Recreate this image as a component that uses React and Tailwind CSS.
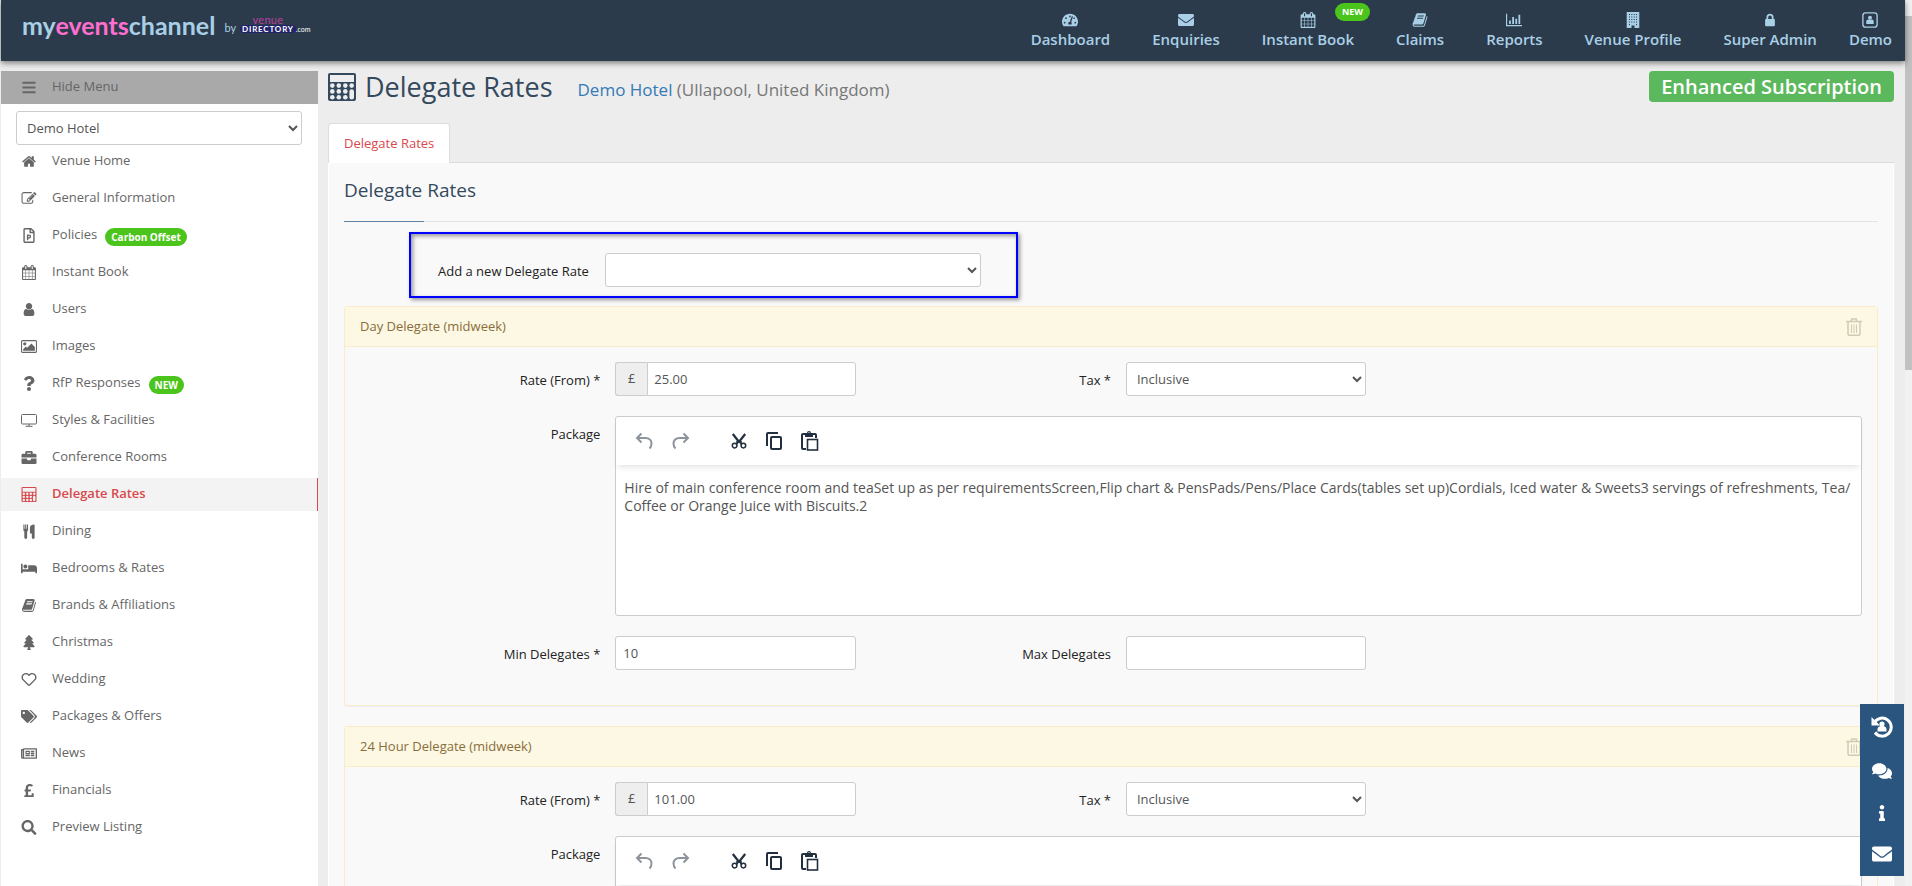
import React, { useState } from "react";
import {
  FaBars,
  FaBed,
  FaBriefcase,
  FaComments,
  FaEnvelope,
  FaInfo,
  FaPoundSign,
  FaQuestion,
  FaRegFilePowerpoint,
  FaRegHeart,
  FaRegNewspaper,
  FaSearch,
  FaTachometerAlt,
  FaTags,
  FaTree,
} from "react-icons/fa";

const Glyph = ({ box = "0 0 1792 1792", d, className }) => (
  <svg viewBox={box} fill="currentColor" className={className} aria-hidden="true">
    <path d={d} />
  </svg>
);

const HomeIcon = (p) => (
  <Glyph {...p} d="M1472 992v480q0 26-19 45t-45 19h-384v-384h-256v384h-384q-26 0-45-19t-19-45v-480q0-1 .5-3t.5-3l575-474 575 474q1 2 1 6zm223-69l-62 74q-8 9-21 11h-3q-13 0-21-7l-692-577-692 577q-12 8-24 7-13-2-21-11l-62-74q-8-10-7-23.5t11-21.5l719-599q32-26 76-26t76 26l244 204v-195q0-14 9-23t23-9h192q14 0 23 9t9 23v408l219 182q10 8 11 21.5t-7 23.5z" />
);

const EditIcon = (p) => (
  <Glyph {...p} d="M888 1184l116-116-152-152-116 116v56h96v96h56zm440-720q-16-16-33 1l-350 350q-17 17-1 33t33-1l350-350q17-17 1-33zm80 594v190q0 119-84.5 203.5t-203.5 84.5h-832q-119 0-203.5-84.5t-84.5-203.5v-832q0-119 84.5-203.5t203.5-84.5h832q63 0 117 25 15 7 18 23 3 17-9 29l-49 49q-14 14-32 8-23-6-45-6h-832q-66 0-113 47t-47 113v832q0 66 47 113t113 47h832q66 0 113-47t47-113v-126q0-13 9-22l64-64q15-15 35-7t20 29zm-96-738l288 288-672 672h-288v-288zm444 132l-92 92-288-288 92-92q28-28 68-28t68 28l152 152q28 28 28 68t-28 68z" />
);

const CalendarIcon = (p) => (
  <Glyph {...p} d="M192 1664h288v-288h-288v288zm352 0h320v-288h-320v288zm-352-352h288v-320h-288v320zm352 0h320v-320h-320v320zm-352-384h288v-288h-288v288zm736 736h320v-288h-320v288zm-384-736h320v-288h-320v288zm768 736h288v-288h-288v288zm-384-352h320v-320h-320v320zm-352-864v-288q0-13-9.5-22.5t-22.5-9.5h-64q-13 0-22.5 9.5t-9.5 22.5v288q0 13 9.5 22.5t22.5 9.5h64q13 0 22.5-9.5t9.5-22.5zm736 864h288v-320h-288v320zm-384-384h320v-288h-320v288zm384 0h288v-288h-288v288zm32-480v-288q0-13-9.5-22.5t-22.5-9.5h-64q-13 0-22.5 9.5t-9.5 22.5v288q0 13 9.5 22.5t22.5 9.5h64q13 0 22.5-9.5t9.5-22.5zm384-64v1280q0 52-38 90t-90 38h-1408q-52 0-90-38t-38-90v-1280q0-52 38-90t90-38h128v-96q0-66 47-113t113-47h64q66 0 113 47t47 113v96h384v-96q0-66 47-113t113-47h64q66 0 113 47t47 113v96h128q52 0 90 38t38 90z" />
);

const UserIcon = (p) => (
  <Glyph {...p} d="M1536 1399q0 109-62.5 187t-150.5 78h-854q-88 0-150.5-78t-62.5-187q0-85 8.5-160.5t31.5-152 58.5-131 94-89 134.5-34.5q131 128 313 128t313-128q76 0 134.5 34.5t94 89 58.5 131 31.5 152 8.5 160.5zm-256-887q0 159-112.5 271.5t-271.5 112.5-271.5-112.5-112.5-271.5 112.5-271.5 271.5-112.5 271.5 112.5 112.5 271.5z" />
);

const PictureIcon = (p) => (
  <Glyph {...p} box="-64 0 1920 1792" d="M576 576q0 80-56 136t-136 56-136-56-56-136 56-136 136-56 136 56 56 136zm1024 384v448h-1408v-192l320-320 160 160 512-512zm96-704h-1600q-13 0-22.5 9.5t-9.5 22.5v1216q0 13 9.5 22.5t22.5 9.5h1600q13 0 22.5-9.5t9.5-22.5v-1216q0-13-9.5-22.5t-22.5-9.5zm160 32v1216q0 66-47 113t-113 47h-1600q-66 0-113-47t-47-113v-1216q0-66 47-113t113-47h1600q66 0 113 47t47 113z" />
);

const BookIcon = (p) => (
  <Glyph {...p} d="M1703 478q40 57 18 129l-275 906q-19 64-76.5 107.5t-122.5 43.5h-923q-77 0-148.5-53.5t-99.5-131.5q-24-67-2-127 0-4 3-27t4-37q1-8-3-21.5t-3-19.5q2-11 8-21t16.5-23.5 16.5-23.5q23-38 45-91.5t30-91.5q3-10 .5-30t-.5-28q3-11 17-28t17-23q21-36 42-92t25-90q1-9-2.5-32t.5-28q4-13 22-30.5t22-22.5q19-26 42.5-84.5t27.5-96.5q1-8-3-25.5t-2-26.5q2-8 9-18t18-23 17-21q8-12 16.5-30.5t15-35 16-36 19.5-32 26.5-23.5 36-11.5 47.5 5.500l-1 3q38-9 51-9h761q74 0 114 56t18 130l-274 906q-36 119-71.500 153.500t-128.500 34.500h-869q-27 0-38 15-11 16-1 43 24 70 144 70h923q29 0 56-15.500t35-41.500l300-987q7-22 5-57 38 15 59 43zm-1064 2q-4 13 2 22.500t20 9.500h608q13 0 25.500-9.500t16.500-22.500l21-64q4-13-2-22.500t-20-9.500h-608q-13 0-25.500 9.500t-16.500 22.500zm-83 256q-4 13 2 22.500t20 9.500h608q13 0 25.500-9.500t16.500-22.500l21-64q4-13-2-22.500t-20-9.500h-608q-13 0-25.500 9.500t-16.500 22.500z" />
);

const CalculatorIcon = ({ className }) => (
  <svg viewBox="0 0 28 28" className={className} aria-hidden="true">
    <path
      fill="currentColor"
      fillRule="evenodd"
      d="M2 0h24a2 2 0 0 1 2 2v24a2 2 0 0 1-2 2H2a2 2 0 0 1-2-2V2a2 2 0 0 1 2-2zM2 2v7h24V2z"
    />
    <g fill="var(--hole, #ededed)">
      {[4.300, 10.800, 17.300].map((x) =>
        [12.600, 18.400, 24.200].map((y) => <circle key={`${x}-${y}`} cx={x} cy={y} r="2.300" />)
      )}
      <circle cx="23.700" cy="12.600" r="2.300" />
      <rect x="21.400" y="16.200" width="4.600" height="10.300" rx="2.300" />
    </g>
  </svg>
);

const TvIcon = ({ className }) => (
  <svg viewBox="0 0 16 14" fill="none" stroke="currentColor" className={className} aria-hidden="true">
    <rect x="0.5" y="1" width="15" height="9.500" rx="1" />
    <path d="M8 10.500v2M4.500 12.800h7" />
  </svg>
);

const CutleryIcon = ({ className }) => (
  <svg viewBox="0 0 13 16" fill="currentColor" className={className} aria-hidden="true">
    <path d="M.5 .5h1.200V5h.7V.5h1.200V5h.7V.5h1.200V6c0 1-.5 1.600-1 2v6.500a1.500 1.500 0 0 1-3 0V8C1 7.600.5 7 .5 6zM12.500 1v13.500a1.500 1.500 0 0 1-3 0V10H7.500V4C7.500 2 9 .5 12 .5a.5.5 0 0 1 .5.5z" />
  </svg>
);

const ChartIcon = ({ className }) => (
  <svg viewBox="0 0 18 16" fill="currentColor" className={className} aria-hidden="true">
    <path d="M0 1h1.300v12.700H18V15H0zM3.500 8.500h2V12.500h-2zM7 4.500h2v8H7zM10.500 6.500h2v6h-2zM14 2h2v10.500h-2z" />
  </svg>
);

const LockIcon = ({ className }) => (
  <svg viewBox="0 0 18 18" className={className} aria-hidden="true">
    <path fill="none" stroke="currentColor" strokeWidth="2" d="M6 8.500V6a3 3 0 0 1 6 0v2.500" />
    <rect x="3.500" y="8" width="11" height="8" rx="1" fill="currentColor" />
  </svg>
);

const BuildingIcon = ({ className }) => (
  <svg viewBox="0 0 14 16" fill="currentColor" className={className} aria-hidden="true">
    <path
      fillRule="evenodd"
      d="M.7 0h12.600v16H8.500v-2.500h-3V16H.7zM3 2v1h1V2zm2.300 0v1h1V2zm2.400 0v1h1V2zM10 2v1h1V2zM3 4.500v1h1v-1zm2.300 0v1h1v-1zm2.400 0v1h1v-1zm2.300 0v1h1v-1zM3 7v1h1V7zm2.300 0v1h1V7zm2.400 0v1h1V7zM10 7v1h1V7zM3 9.500v1h1v-1zm2.300 0v1h1v-1zm2.400 0v1h1v-1zm2.300 0v1h1v-1zM3 12v1h1v-1zm7 0v1h1v-1z"
    />
  </svg>
);

const BadgeIcon = ({ className }) => (
  <svg viewBox="0 0 18 18" className={className} aria-hidden="true">
    <rect x="1" y="1" width="16" height="16" rx="3" fill="none" stroke="currentColor" strokeWidth="1.500" />
    <circle cx="9" cy="6.300" r="2.200" fill="currentColor" />
    <path fill="currentColor" d="M4.800 13.500V11c0-1.500 1-2.500 2.300-2.500h3.800c1.300 0 2.300 1 2.300 2.500v2.500z" />
  </svg>
);

const TrashIcon = ({ className }) => (
  <svg viewBox="0 0 16 18" fill="none" stroke="currentColor" className={className} aria-hidden="true">
    <path
      strokeWidth="1.500"
      d="M0 3.500h16M5 3.500l.8-2.500h4.400l.8 2.500M2 3.500v12.300c0 1 .6 1.500 1.500 1.500h9c.9 0 1.500-.5 1.500-1.500V3.500"
    />
    <path d="M5.500 6.500V15M8 6.500V15M10.500 6.500V15" />
  </svg>
);

const LoginHistoryIcon = ({ className }) => (
  <svg viewBox="0 0 22 22" className={className} aria-hidden="true">
    <path fill="none" stroke="currentColor" strokeWidth="3" d="M3.500 6.500A9 9 0 1 1 4 16.500" />
    <path fill="currentColor" d="M.5 1v8.500H9zM11 5.500a2.600 2.600 0 0 1 2.600 2.600c0 .9-.4 1.600-1 2.100 1.800.2 2.900 1.400 2.900 3v2.300h-9v-2.300c0-1.600 1.100-2.800 2.900-3-.6-.5-1-1.200-1-2.100A2.600 2.600 0 0 1 11 5.500z" />
  </svg>
);

// editor toolbar icons
const UndoIcon = ({ className }) => (
  <svg viewBox="0 0 18 18" fill="none" stroke="currentColor" strokeWidth="2" className={className} aria-hidden="true">
    <path d="M6.500 1.500L2 6l4.500 4.500M2 6h8.500c3.600 0 6 2.300 6 5.500 0 1.900-.7 3.600-2 5" />
  </svg>
);

const RedoIcon = ({ className }) => (
  <svg viewBox="0 0 18 18" fill="none" stroke="currentColor" strokeWidth="2" className={className} aria-hidden="true">
    <path d="M11.500 1.500L16 6l-4.500 4.500M16 6H7.500c-3.600 0-6 2.300-6 5.500 0 1.900.7 3.600 2 5" />
  </svg>
);

const CutIcon = ({ className }) => (
  <svg viewBox="0 0 16 16" fill="none" stroke="currentColor" className={className} aria-hidden="true">
    <path strokeWidth="2.200" d="M1.800 1l6.700 8.500M14.200 1L7.500 9.500" />
    <path strokeWidth="1.500" d="M5 9h6" />
    <circle cx="3.600" cy="12.600" r="2.300" strokeWidth="1.500" />
    <circle cx="12.400" cy="12.600" r="2.300" strokeWidth="1.500" />
    <path strokeWidth="1.500" d="M7 9l-1.500 2.500M9 9l1.500 2.500" />
  </svg>
);

const CopyIcon = ({ className }) => (
  <svg viewBox="0 0 16 18" fill="none" stroke="currentColor" strokeWidth="2" className={className} aria-hidden="true">
    <path d="M1 14V2a1 1 0 0 1 1-1h10" />
    <rect x="5" y="5" width="10" height="12" rx="1" />
  </svg>
);

const PasteIcon = ({ className }) => (
  <svg viewBox="0 0 18 20" fill="none" stroke="currentColor" className={className} aria-hidden="true">
    <path strokeWidth="2" d="M5 18H2a1 1 0 0 1-1-1V4a1 1 0 0 1 1-1h12a1 1 0 0 1 1 1v3" />
    <path fill="currentColor" stroke="none" fillRule="evenodd" d="M4 2h2a2 2 0 0 1 4 0h2v4H4zM8 1.200a.9.9 0 1 0 0 1.800.9.9 0 0 0 0-1.800z" />
    <rect x="6.500" y="8.500" width="10" height="10.500" strokeWidth="1.600" />
  </svg>
);

const navLinks = [
  { label: "Dashboard", icon: FaTachometerAlt },
  { label: "Enquiries", icon: FaEnvelope },
  { label: "Instant Book", icon: CalendarIcon, badge: "NEW" },
  { label: "Claims", icon: BookIcon },
  { label: "Reports", icon: ChartIcon },
  { label: "Venue Profile", icon: BuildingIcon },
  { label: "Super Admin", icon: LockIcon },
  { label: "Demo", icon: BadgeIcon },
];

const menuItems = [
  { label: "Venue Home", icon: HomeIcon },
  { label: "General Information", icon: EditIcon },
  { label: "Policies", icon: FaRegFilePowerpoint, badge: "Carbon Offset" },
  { label: "Instant Book", icon: CalendarIcon },
  { label: "Users", icon: UserIcon },
  { label: "Images", icon: PictureIcon },
  { label: "RfP Responses", icon: FaQuestion, badge: "NEW" },
  { label: "Styles & Facilities", icon: TvIcon },
  { label: "Conference Rooms", icon: FaBriefcase },
  { label: "Delegate Rates", icon: CalculatorIcon, active: true },
  { label: "Dining", icon: CutleryIcon },
  { label: "Bedrooms & Rates", icon: FaBed },
  { label: "Brands & Affiliations", icon: BookIcon },
  { label: "Christmas", icon: FaTree },
  { label: "Wedding", icon: FaRegHeart },
  { label: "Packages & Offers", icon: FaTags },
  { label: "News", icon: FaRegNewspaper },
  { label: "Financials", icon: FaPoundSign },
  { label: "Preview Listing", icon: FaSearch },
];

const delegateRates = [
  {
    id: "day",
    title: "Day Delegate (midweek)",
    rate: "25.00",
    min: "10",
    text: "Hire of main conference room and teaSet up as per requirementsScreen,Flip chart & PensPads/Pens/Place Cards(tables set up)Cordials, Iced water & Sweets3 servings of refreshments, Tea/ Coffee or Orange Juice with Biscuits.2",
  },
  { id: "24hr", title: "24 Hour Delegate (midweek)", rate: "101.00", min: "10", text: "" },
];

const field = "h-[34px] border border-[#ccc] rounded-[3px] bg-white text-[13px] text-[#555] outline-none";

function Header() {
  return (
    <header className="relative z-10 flex h-[61px] shrink-0 justify-between bg-[#2c3b4b] shadow-[0_2px_6px_rgba(0,0,0,0.5)]">
      <a href="#home" className="flex items-start pl-[21px] pt-2">
        <span className="font-['Lato'] text-[25px] leading-[34px] font-bold text-[#a9cfe6]">
          my<span className="text-[#ff6fcf]">events</span>channel
        </span>
        <span className="pl-[9px] pt-[11px] font-['Lato'] text-[11px] leading-[18px] text-[#a9cfe6]">by</span>
        <span className="flex items-end pl-1 pt-[6px] font-['Lato']">
          <span className="flex flex-col items-center">
            <span className="text-[11px] leading-[11px] tracking-wide text-[#b8409f]">venue</span>
            <span className="rounded-sm bg-[#23236b] px-[2px] text-[8px] leading-[8px] font-bold tracking-widest text-white">
              DIRECTORY
            </span>
          </span>
          <span className="text-[7px] leading-[7px] text-white">.com</span>
        </span>
      </a>
      <nav className="flex gap-[42px] pr-[13px] pt-[11px]">
        {navLinks.map(({ label, icon: Icon, badge }) => (
          <a
            key={label}
            href="#nav"
            className="relative flex flex-col items-center text-[15px] leading-[20px] font-semibold text-[#a9cfe6] last:-ml-[10px]"
          >
            <Icon className="h-[18px] w-[18px] p-[1px]" />
            <span className="whitespace-nowrap">{label}</span>
            {badge && (
              <span className="absolute -top-2 -right-4 rounded-full bg-[#4bc41b] px-[7px] text-[9px] leading-[18px] font-bold text-white">
                {badge}
              </span>
            )}
          </a>
        ))}
      </nav>
    </header>
  );
}

function Sidebar() {
  const [venue, setVenue] = useState("Demo Hotel");

  return (
    <aside className="w-[317px] shrink-0 bg-white text-[13px] text-[#666]">
      <button type="button" className="flex h-[33px] w-full items-center bg-[#a9a9a9] pb-px pl-5">
        <FaBars className="h-[15px] w-4" />
        <span className="pl-[15px]">Hide Menu</span>
      </button>
      <div className="pr-4 pl-[15px] pt-[7px]">
        <select
          aria-label="Venue"
          className={`${field} w-full pl-[6px]`}
          value={venue}
          onChange={(e) => setVenue(e.target.value)}
        >
          <option>Demo Hotel</option>
        </select>
      </div>
      <ul className="flex flex-col gap-1">
        {menuItems.map(({ label, icon: Icon, badge, active }) => (
          <li key={label}>
            <a
              href="#menu"
              className={
                active
                  ? "flex h-[33px] items-center border-r border-[#d9484c] bg-[#f3f3f3] pb-px pl-5 font-semibold text-[#d9484c] [--hole:#f3f3f3]"
                  : "flex h-[33px] items-center pb-px pl-5"
              }
            >
              <Icon className="h-[15px] w-4" />
              <span className="pl-[15px]">{label}</span>
              {badge && (
                <span className="ml-2 mt-[3px] rounded-full bg-[#4bc41b] px-[6px] text-[10px] leading-[18px] font-bold text-white">
                  {badge}
                </span>
              )}
            </a>
          </li>
        ))}
      </ul>
    </aside>
  );
}

function RatePanel({ id, title, rate, min, text }) {
  const label = "self-start pt-[9px] text-right text-[13px] leading-[18px] font-medium text-[#222]";

  return (
    <section className="mb-5 rounded-[3px] border border-[#faebcc] shadow-[0_1px_1px_rgba(0,0,0,0.05)]">
      <div className="flex h-10 items-center justify-between border-b border-[#faebcc] bg-[#fcf8e3] px-[15px]">
        <h3 className="pb-[2px] text-[13px] leading-[18px] text-[#8a6d3b]">{title}</h3>
        <button type="button" aria-label={`Delete ${title}`} className="text-[#cfccb4]">
          <TrashIcon className="h-[18px] w-4" />
        </button>
      </div>
      <div className="flex flex-col gap-5 pt-[15px] pb-[35px]">
        <div className="grid grid-cols-6">
          <label htmlFor={`${id}-rate`} className={label}>Rate (From) *</label>
          <div className="flex pl-[15px]">
            <span className="flex w-8 items-center justify-center rounded-l-[3px] border border-r-0 border-[#ccc] bg-[#eee] text-[13px] text-[#555]">
              £
            </span>
            <input
              id={`${id}-rate`}
              defaultValue={rate}
              className="h-[34px] min-w-0 flex-1 rounded-r-[3px] border border-[#ccc] bg-white px-[6px] text-[13px] text-[#555] outline-none"
            />
          </div>
          <label htmlFor={`${id}-tax`} className={label}>Tax *</label>
          <div className="pl-[15px]">
            <select id={`${id}-tax`} className={`${field} w-full pl-[6px]`}>
              <option>Inclusive</option>
              <option>Exclusive</option>
            </select>
          </div>
        </div>

        <div className="grid grid-cols-6">
          <label htmlFor={`${id}-package`} className={label}>Package</label>
          <div className="col-span-5 px-[15px]">
            <div className="flex h-[200px] flex-col rounded-[3px] border border-[#ccc] bg-white">
              <div className="flex h-12 items-center pl-[19px] shadow-[0_4px_6px_-2px_rgba(0,0,0,0.12)]">
                <button type="button" aria-label="Undo" className="text-[#8e949c]">
                  <UndoIcon className="h-[18px] w-[18px]" />
                </button>
                <button type="button" aria-label="Redo" className="ml-[19px] text-[#8e949c]">
                  <RedoIcon className="h-[18px] w-[18px]" />
                </button>
                <button type="button" aria-label="Cut" className="ml-[41px] text-[#222f3e]">
                  <CutIcon className="h-4 w-4" />
                </button>
                <button type="button" aria-label="Copy" className="ml-[19px] text-[#222f3e]">
                  <CopyIcon className="h-[18px] w-4" />
                </button>
                <button type="button" aria-label="Paste" className="ml-[19px] text-[#222f3e]">
                  <PasteIcon className="h-5 w-[18px]" />
                </button>
              </div>
              <textarea
                id={`${id}-package`}
                defaultValue={text}
                className="flex-1 resize-none bg-transparent px-2 pt-[14px] text-[14px] leading-[18px] text-[#555] outline-none"
              />
            </div>
          </div>
        </div>

        <div className="grid grid-cols-6">
          <label htmlFor={`${id}-min`} className={label}>Min Delegates *</label>
          <div className="pl-[15px]">
            <input id={`${id}-min`} defaultValue={min} className={`${field} w-full px-[7px]`} />
          </div>
          <label htmlFor={`${id}-max`} className={label}>Max Delegates</label>
          <div className="pl-[15px]">
            <input id={`${id}-max`} className={`${field} w-full px-[7px]`} />
          </div>
        </div>
      </div>
    </section>
  );
}

function QuickBar() {
  return (
    <div className="fixed right-2 bottom-[10px] z-20 flex h-[172px] w-11 flex-col items-center justify-around bg-[#2a557f] text-white">
      <button type="button" aria-label="Login history"><LoginHistoryIcon className="h-[22px] w-[22px]" /></button>
      <button type="button" aria-label="Chat"><FaComments className="h-5 w-5" /></button>
      <button type="button" aria-label="Information"><FaInfo className="h-4 w-4" /></button>
      <button type="button" aria-label="Email"><FaEnvelope className="h-5 w-5" /></button>
    </div>
  );
}

export default function App() {
  return (
    <div className="flex h-screen overflow-hidden bg-[#ededed] font-['Trebuchet_MS','Open_Sans',sans-serif]">
      <div className="flex min-w-0 flex-1 flex-col pl-px">
        <Header />
        <div className="flex min-h-0 flex-1 pt-[10px]">
          <Sidebar />
          <main className="min-w-0 flex-1 pl-[10px] pr-[11px]">
            <div className="flex h-[52px] items-start justify-between">
              <div className="flex items-center">
                <CalculatorIcon className="h-7 w-7 text-[#34495e]" />
                <h1 className="pl-[9px] text-[27px] leading-[32px] text-[#34495e]">Delegate Rates</h1>
                <p className="pl-[25px] pt-[6px] text-[17px] leading-[26px] text-[#777]">
                  <a href="#venue" className="text-[#337ab7]">Demo Hotel</a> (Ullapool, United Kingdom)
                </p>
              </div>
              <span className="rounded-[4px] bg-[#5cb85c] px-3 text-[20px] leading-[31px] font-semibold text-white">
                Enhanced Subscription
              </span>
            </div>

            <div role="tablist" className="flex border-b border-[#ddd]">
              <button
                type="button"
                role="tab"
                aria-selected="true"
                className="-mb-px h-10 rounded-t-[4px] border border-b-0 border-[#ddd] bg-white px-[15px] text-[13px] font-medium text-[#d9484c]"
              >
                Delegate Rates
              </button>
            </div>

            <div className="h-full border-x border-white bg-[#f9f9f9] px-[15px]">
              <h2 className="pt-[14px] pb-[17px] text-[19px] leading-[27px] text-[#34495e]">Delegate Rates</h2>
              <div className="h-px bg-[#e5e5e5]">
                <div className="h-px w-20 bg-[#5f83a5]" />
              </div>
              <div className="mt-[10px] mb-2 ml-[65px] flex h-[66px] w-[609px] items-start border-2 border-[#0000ff] pt-[19px] pl-[27px] shadow-[2px_2px_4px_rgba(0,0,0,0.4),inset_2px_2px_4px_rgba(0,0,0,0.4)]">
                <label htmlFor="new-rate" className="pt-[9px] text-[13px] leading-[18px] font-medium text-[#222]">
                  Add a new Delegate Rate
                </label>
                <select id="new-rate" className={`${field} ml-4 w-[376px]`} />
              </div>
              {delegateRates.map((r) => (
                <RatePanel key={r.id} {...r} />
              ))}
            </div>
          </main>
        </div>
      </div>
      <div className="w-[7px] shrink-0 bg-[#f1f1f1] pt-4">
        <div className="h-[354px] bg-[#c1c1c1]" />
      </div>
      <QuickBar />
    </div>
  );
}
